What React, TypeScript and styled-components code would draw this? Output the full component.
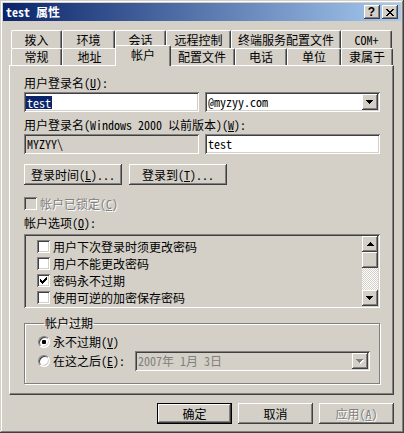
import React from "react";
import styled, { createGlobalStyle, css } from "styled-components";

const FONT = `"Noto Sans Mono CJK SC", "Noto Sans CJK SC", "DejaVu Sans Mono", monospace`;

const GlobalStyle = createGlobalStyle`
  html, body { margin: 0; padding: 0; background: #d4d0c8; }
  body { font-family: ${FONT}; font-size: 12px; color: #000; }
  * { box-sizing: border-box; }
`;

const raised = css`
  box-shadow: inset -1px -1px #404040, inset 1px 1px #fff, inset -2px -2px #808080, inset 2px 2px #d4d0c8;
`;
const sunken = css`
  box-shadow: inset 1px 1px #808080, inset -1px -1px #fff, inset 2px 2px #404040, inset -2px -2px #d4d0c8;
`;
const disabledText = css`
  color: #808080;
  text-shadow: 1px 1px 0 #fff;
`;

const Window = styled.div`
  width: 404px;
  height: 433px;
  background: #d4d0c8;
  padding: 3px;
  box-shadow: inset -1px -1px #404040, inset 1px 1px #d4d0c8, inset -2px -2px #808080, inset 2px 2px #fff;
  display: flex;
  flex-direction: column;
`;

const TitleBar = styled.div`
  height: 18px;
  flex: none;
  display: flex;
  align-items: center;
  padding: 0 3px 0 3px;
  background: linear-gradient(to right, #0a246a, #a6caf0);
`;

const TitleText = styled.div`
  flex: 1;
  color: #fff;
  font-weight: bold;
  line-height: 14px;
  white-space: nowrap;
`;

const CaptionButtons = styled.div`
  display: flex;
  gap: 2px;
`;

const CaptionButton = styled.div`
  width: 16px;
  height: 14px;
  background: #d4d0c8;
  ${raised};
  display: flex;
  align-items: center;
  justify-content: center;
  font-family: "Liberation Sans", Arial, sans-serif;
  font-weight: bold;
  font-size: 12px;
  line-height: 12px;
  padding-right: 1px;
`;

const TabControl = styled.div`
  margin: 9px 7px 0 6px;
  display: flex;
  flex-direction: column;
`;

const TabRow = styled.div<{ $h: number }>`
  height: ${(p) => p.$h}px;
  display: flex;
  align-items: flex-end;
  padding-left: 2px;
`;

const Tab = styled.div<{ $w: number; $active?: boolean }>`
  flex: none;
  width: ${(p) => p.$w}px;
  height: 100%;
  display: flex;
  align-items: center;
  justify-content: center;
  background: #d4d0c8;
  border-top: 1px solid #fff;
  border-left: 1px solid #fff;
  border-right: 1px solid #404040;
  box-shadow: inset -1px 0 #808080;
  border-radius: 2px 2px 0 0;
  white-space: nowrap;
  line-height: 12px;
  ${(p) =>
    p.$active &&
    css`
      position: relative;
      z-index: 2;
      height: 21px;
      margin: 0 -2px -1px -2px;
      width: ${p.$w + 4}px;
      padding-bottom: 3px;
    `}
`;

const Panel = styled.div`
  height: 330px;
  flex: none;
  background: #d4d0c8;
  border-top: 1px solid #fff;
  border-left: 1px solid #fff;
  border-right: 1px solid #404040;
  border-bottom: 1px solid #404040;
  box-shadow: inset -1px -1px #808080;
  padding: 11px 13px 0 14px;
  display: flex;
  flex-direction: column;
`;

const Label = styled.div<{ $mt?: number; $disabled?: boolean }>`
  height: 12px;
  line-height: 12px;
  margin-top: ${(p) => p.$mt ?? 0}px;
  white-space: nowrap;
  ${(p) => p.$disabled && disabledText}
`;

const Acc = styled.span`
  text-decoration: underline;
`;

const FieldRow = styled.div<{ $mt: number }>`
  margin-top: ${(p) => p.$mt}px;
  display: grid;
  grid-template-columns: 175px 175px;
  column-gap: 6px;
`;

const Edit = styled.div<{ $disabled?: boolean }>`
  height: 20px;
  background: ${(p) => (p.$disabled ? "#d4d0c8" : "#fff")};
  ${sunken};
  display: flex;
  align-items: center;
  padding: 0 2px 0 3px;
  line-height: 14px;
  white-space: nowrap;
`;

const Selected = styled.span`
  background: #0a246a;
  color: #fff;
  margin-left: -1px;
  padding: 0 1px;
  line-height: 13px;
`;

const Combo = styled.div<{ $disabled?: boolean; $w?: number }>`
  height: 20px;
  ${(p) => p.$w && css`width: ${p.$w}px; flex: none;`}
  background: ${(p) => (p.$disabled ? "#d4d0c8" : "#fff")};
  ${sunken};
  display: flex;
  align-items: center;
  padding: 2px;
  line-height: 14px;
  white-space: nowrap;
  ${(p) => p.$disabled && css`color: #808080;`}
`;

const ComboText = styled.div`
  flex: 1;
  padding-left: 1px;
`;

const ArrowButton = styled.div<{ $h?: number }>`
  width: 16px;
  height: ${(p) => p.$h ?? 16}px;
  flex: none;
  background: #d4d0c8;
  ${raised};
  display: flex;
  align-items: center;
  justify-content: center;
`;

const ButtonRow = styled.div<{ $mt: number }>`
  margin-top: ${(p) => p.$mt}px;
  display: flex;
  gap: 7px;
`;

const PushButton = styled.div<{ $w: number; $default?: boolean; $disabled?: boolean }>`
  width: ${(p) => p.$w}px;
  height: 21px;
  flex: none;
  background: #d4d0c8;
  ${raised};
  display: flex;
  align-items: center;
  justify-content: center;
  line-height: 12px;
  white-space: nowrap;
  ${(p) =>
    p.$default &&
    css`
      box-shadow: inset 0 0 0 1px #000, inset -2px -2px #404040, inset 2px 2px #fff, inset -3px -3px #808080;
    `}
  ${(p) => p.$disabled && disabledText}
`;

const CheckRow = styled.div<{ $mt?: number; $disabled?: boolean }>`
  margin-top: ${(p) => p.$mt ?? 0}px;
  display: flex;
  align-items: center;
  height: 13px;
  line-height: 12px;
  white-space: nowrap;
  ${(p) => p.$disabled && disabledText}
`;

const Box = styled.div<{ $disabled?: boolean }>`
  width: 13px;
  height: 13px;
  flex: none;
  margin-right: 3px;
  background: ${(p) => (p.$disabled ? "#d4d0c8" : "#fff")};
  ${sunken};
  display: flex;
  align-items: center;
  justify-content: center;
`;

const ListBox = styled.div<{ $mt: number }>`
  margin-top: ${(p) => p.$mt}px;
  height: 74px;
  flex: none;
  background: #d4d0c8;
  ${sunken};
  padding: 2px;
  display: flex;
`;

const ListItems = styled.div`
  flex: 1;
  padding-top: 2px;
  overflow: hidden;
`;

const ListRow = styled.div`
  height: 17px;
  display: flex;
  align-items: center;
  padding-left: 11px;
  line-height: 12px;
  white-space: nowrap;
`;

const ScrollBar = styled.div`
  width: 16px;
  flex: none;
  display: flex;
  flex-direction: column;
`;

const ScrollThumb = styled.div`
  height: 16px;
  flex: none;
  background: #d4d0c8;
  ${raised};
`;

const ScrollTrack = styled.div`
  flex: 1;
  background-image: repeating-conic-gradient(#fff 0 25%, #d4d0c8 0 50%);
  background-size: 2px 2px;
`;

const GroupBox = styled.fieldset`
  margin: 9px 0 0 0;
  height: 67px;
  border: 1px solid #808080;
  box-shadow: inset 1px 1px #fff, 1px 1px #fff;
  padding: 4px 9px 0 13px;
  min-width: 0;
`;

const Legend = styled.legend`
  margin-left: 6px;
  padding: 0 1px;
  line-height: 12px;
  height: 12px;
`;

const RadioRow = styled.div<{ $h: number }>`
  height: ${(p) => p.$h}px;
  display: flex;
  align-items: center;
  line-height: 12px;
  white-space: nowrap;
`;

const Radio = styled.div<{ $checked?: boolean }>`
  width: 12px;
  height: 12px;
  flex: none;
  margin-right: 3px;
  border-radius: 50%;
  background: #fff;
  border: 1px solid;
  border-color: #808080 #fff #fff #808080;
  box-shadow: inset 1px 1px #404040, inset -1px -1px #d4d0c8;
  display: flex;
  align-items: center;
  justify-content: center;
  &::after {
    content: "";
    display: ${(p) => (p.$checked ? "block" : "none")};
    width: 4px;
    height: 4px;
    border-radius: 1px;
    background: #000;
  }
`;

const Spacer = styled.div`
  flex: 1;
`;

const DialogButtons = styled.div`
  margin-top: 8px;
  padding-right: 7px;
  display: flex;
  justify-content: flex-end;
  gap: 6px;
`;

const CloseIcon = () => (
  <svg width="8" height="7" viewBox="0 0 8 7" shapeRendering="crispEdges">
    <path
      fill="#000"
      d="M0 0h2v1H0z M6 0h2v1H6z M1 1h2v1H1z M5 1h2v1H5z M2 2h4v1H2z M3 3h2v1H3z M2 4h4v1H2z M1 5h2v1H1z M5 5h2v1H5z M0 6h2v1H0z M6 6h2v1H6z"
    />
  </svg>
);

const CheckMark = () => (
  <svg width="7" height="7" viewBox="0 0 7 7" shapeRendering="crispEdges">
    <path
      fill="#000"
      d="M6 0h1v1H6z M5 1h2v1H5z M0 2h1v1H0z M4 2h3v1H4z M0 3h2v1H0z M3 3h3v1H3z M0 4h5v1H0z M1 5h3v1H1z M2 6h1v1H2z"
    />
  </svg>
);

const ArrowDown = ({ color = "#000", shadow = false }: { color?: string; shadow?: boolean }) => (
  <svg width="8" height="5" viewBox="0 0 8 5" shapeRendering="crispEdges">
    {shadow && <path fill="#fff" d="M1 1h7v1H7v1H6v1H5v1H4V4H3V3H2V2H1z" />}
    <path fill={color} d="M0 0h7v1H6v1H5v1H4v1H3V3H2V2H1V1H0z" />
  </svg>
);

const ArrowUp = () => (
  <svg width="7" height="4" viewBox="0 0 7 4" shapeRendering="crispEdges">
    <path fill="#000" d="M3 0h1v1h1v1h1v1h1v1H0V3h1V2h1V1h1z" />
  </svg>
);

const topTabs = [
  { label: "拨入", w: 51 },
  { label: "环境", w: 53 },
  { label: "会话", w: 51 },
  { label: "远程控制", w: 65 },
  { label: "终端服务配置文件", w: 110 },
  { label: "COM+", w: 51 },
];

const bottomTabs = [
  { label: "常规", w: 51 },
  { label: "地址", w: 55 },
  { label: "帐户", w: 52, active: true },
  { label: "配置文件", w: 66 },
  { label: "电话", w: 52 },
  { label: "单位", w: 54 },
  { label: "隶属于", w: 52 },
];

const options = [
  { label: "用户下次登录时须更改密码", checked: false },
  { label: "用户不能更改密码", checked: false },
  { label: "密码永不过期", checked: true },
  { label: "使用可逆的加密保存密码", checked: false },
];

export default function App() {
  return (
    <>
      <GlobalStyle />
      <Window>
        <TitleBar>
          <TitleText>test 属性</TitleText>
          <CaptionButtons>
            <CaptionButton>?</CaptionButton>
            <CaptionButton>
              <CloseIcon />
            </CaptionButton>
          </CaptionButtons>
        </TitleBar>

        <TabControl>
          <TabRow $h={18}>
            {topTabs.map((t) => (
              <Tab key={t.label} $w={t.w}>
                {t.label}
              </Tab>
            ))}
          </TabRow>
          <TabRow $h={17}>
            {bottomTabs.map((t) => (
              <Tab key={t.label} $w={t.w} $active={t.active}>
                {t.label}
              </Tab>
            ))}
          </TabRow>
          <Panel>
            <Label>
              用户登录名(<Acc>U</Acc>):
            </Label>
            <FieldRow $mt={3}>
              <Edit>
                <Selected>test</Selected>
              </Edit>
              <Combo>
                <ComboText>@myzyy.com</ComboText>
                <ArrowButton>
                  <ArrowDown />
                </ArrowButton>
              </Combo>
            </FieldRow>
            <Label $mt={7}>
              用户登录名(Windows 2000 以前版本)(<Acc>W</Acc>):
            </Label>
            <FieldRow $mt={3}>
              <Edit $disabled>MYZYY\</Edit>
              <Edit>test</Edit>
            </FieldRow>
            <ButtonRow $mt={10}>
              <PushButton $w={98}>
                登录时间(<Acc>L</Acc>)...
              </PushButton>
              <PushButton $w={98}>
                登录到(<Acc>T</Acc>)...
              </PushButton>
            </ButtonRow>
            <CheckRow $mt={12} $disabled>
              <Box $disabled />
              帐户已锁定(<Acc>C</Acc>)
            </CheckRow>
            <Label $mt={7}>
              帐户选项(<Acc>O</Acc>):
            </Label>
            <ListBox $mt={5}>
              <ListItems>
                {options.map((o) => (
                  <ListRow key={o.label}>
                    <Box>{o.checked && <CheckMark />}</Box>
                    {o.label}
                  </ListRow>
                ))}
              </ListItems>
              <ScrollBar>
                <ArrowButton>
                  <ArrowUp />
                </ArrowButton>
                <ScrollThumb />
                <ScrollTrack />
                <ArrowButton>
                  <ArrowDown />
                </ArrowButton>
              </ScrollBar>
            </ListBox>
            <GroupBox>
              <Legend>帐户过期</Legend>
              <RadioRow $h={18}>
                <Radio $checked />
                永不过期(<Acc>V</Acc>)
              </RadioRow>
              <RadioRow $h={20}>
                <Radio />
                在这之后(<Acc>E</Acc>):
                <Spacer />
                <Combo $disabled $w={235}>
                  <ComboText>2007年 1月 3日</ComboText>
                  <ArrowButton>
                    <ArrowDown color="#808080" shadow />
                  </ArrowButton>
                </Combo>
              </RadioRow>
            </GroupBox>
          </Panel>
        </TabControl>

        <DialogButtons>
          <PushButton $w={75} $default>
            确定
          </PushButton>
          <PushButton $w={75}>取消</PushButton>
          <PushButton $w={75} $disabled>
            应用(<Acc>A</Acc>)
          </PushButton>
        </DialogButtons>
      </Window>
    </>
  );
}
